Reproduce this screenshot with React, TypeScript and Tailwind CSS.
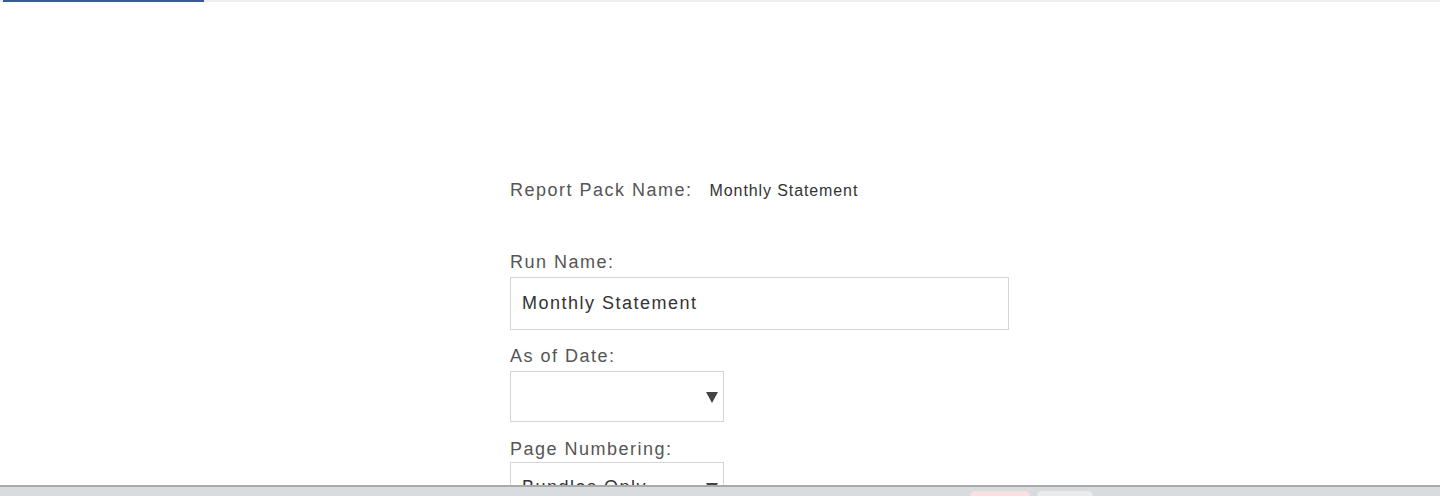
import { useState } from "react";

const labelCls = "text-[18px] leading-[20px] tracking-[1.5px] text-[#555]";

function Caret() {
  return (
    <svg width="12" height="12" viewBox="0 0 12 12" className="shrink-0">
      <path d="M0 1h12L6 12z" fill="#444" />
    </svg>
  );
}

export default function App() {
  const [runName, setRunName] = useState("Monthly Statement");

  return (
    <div className="h-[496px] w-[1440px] flex flex-col overflow-hidden bg-white font-['Liberation_Sans',Arial,sans-serif]">
      {/* top progress strip */}
      <div className="flex h-[2px] bg-[#eeeeee]">
        <div className="ml-[3px] w-[201px] bg-[#3b5a95]" />
      </div>

      <main className="flex-1 overflow-hidden">
        <div className="ml-[510px] w-[499px] flex flex-col">
          <div className="mt-[178px] flex items-baseline gap-[17px]">
            <span className={labelCls}>Report Pack Name:</span>
            <span className="text-[16px] leading-[20px] tracking-[0.9px] text-[#333]">Monthly Statement</span>
          </div>

          <label className={`${labelCls} mt-[51px]`}>Run Name:</label>
          <input
            value={runName}
            onChange={(e) => setRunName(e.target.value)}
            className="mt-[5px] h-[53px] w-[499px] border border-[#d4d4d4] px-[11px] text-[18px] tracking-[1.5px] text-[#333] outline-none"
          />

          <label className={`${labelCls} mt-[16px]`}>As of Date:</label>
          <div className="mt-[5px] h-[51px] w-[214px] border border-[#d4d4d4] flex items-center justify-end pr-[5px]">
            <Caret />
          </div>

          <label className={`${labelCls} mt-[17px]`}>Page Numbering:</label>
          <div className="mt-[3px] h-[51px] w-[214px] border border-[#d4d4d4] flex items-center justify-between pl-[11px] pr-[5px]">
            <span className="text-[18px] tracking-[1.5px] text-[#333]">Bundles Only</span>
            <Caret />
          </div>
        </div>
      </main>

      {/* footer bar */}
      <footer className="h-[11px] shrink-0 border-t-2 border-[#a9a9a9] bg-[#d9dcdf] flex items-end">
        <div className="ml-[970px] h-[5px] w-[60px] rounded-t-[6px] bg-[#fbe0e2]" />
        <div className="ml-[7px] h-[5px] w-[56px] rounded-t-[6px] bg-[#e9ebed]" />
      </footer>
    </div>
  );
}
